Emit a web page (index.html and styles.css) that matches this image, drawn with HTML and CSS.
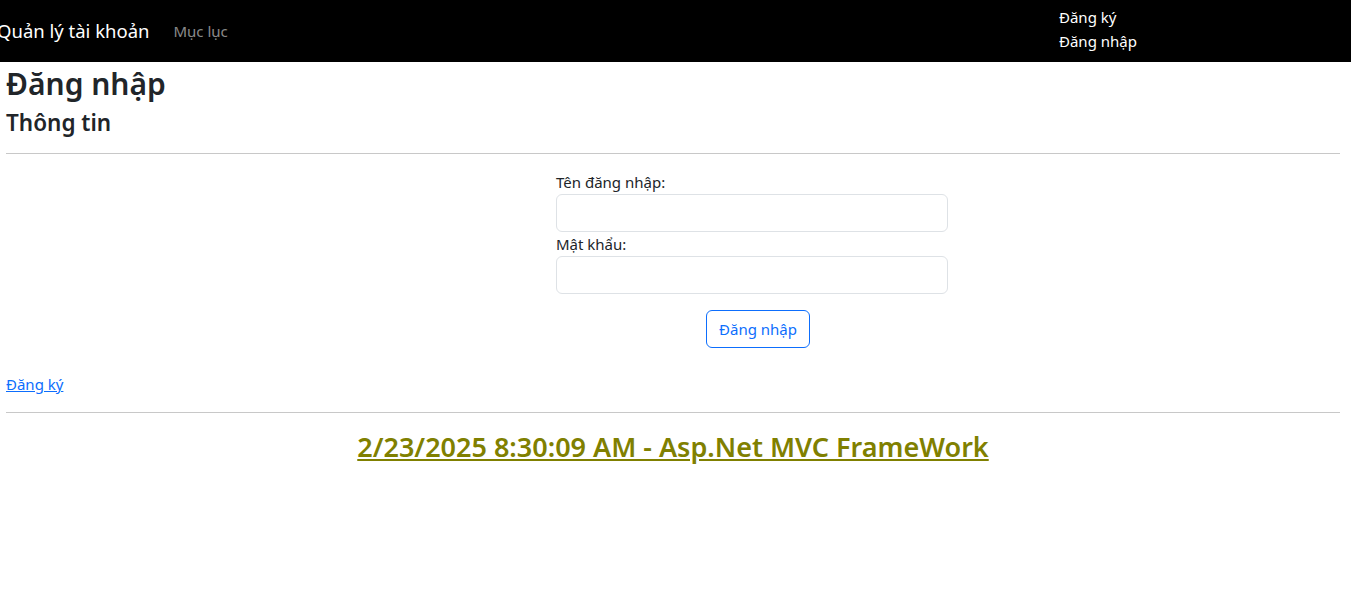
FILE: index.html
```html
<!DOCTYPE html>
<html lang="vi">
<head>
<meta charset="utf-8">
<title>Đăng nhập</title>
<link rel="stylesheet" href="styles.css">
</head>
<body>
<nav class="navbar">
  <div class="nav-left">
    <a class="brand" href="#">Quản lý tài khoản</a>
    <a class="nav-link" href="#">Mục lục</a>
  </div>
  <ul class="nav-right">
    <li><a href="#">Đăng ký</a></li>
    <li><a href="#">Đăng nhập</a></li>
  </ul>
</nav>
<main class="content">
  <h1 class="title">Đăng nhập</h1>
  <h2 class="subtitle">Thông tin</h2>
  <hr class="rule">
  <form class="login-form">
    <label class="field-label" for="u">Tên đăng nhập:</label>
    <input class="field-input" id="u" type="text">
    <label class="field-label" for="p">Mật khẩu:</label>
    <input class="field-input" id="p" type="password">
    <div class="actions"><button class="btn" type="button">Đăng nhập</button></div>
  </form>
  <a class="register-link" href="#">Đăng ký</a>
  <hr class="rule rule-bottom">
  <footer class="footer"><a href="#">2/23/2025 8:30:09 AM - Asp.Net MVC FrameWork</a></footer>
</main>
</body>
</html>
```
FILE: styles.css
```css
* { box-sizing: border-box; }
body {
  margin: 0;
  font-family: "Noto Sans", "Open Sans", sans-serif;
  font-size: 15px;
  color: #212529;
  background: #fff;
}
a { text-decoration: none; }
.navbar {
  background: #000;
  height: 62px;
  display: flex;
  align-items: center;
}
.nav-left {
  display: flex;
  align-items: center;
  margin-left: -3px;
  margin-top: -1px;
  width: 1062px;
}
.brand {
  color: #fff;
  font-size: 18.5px;
  margin-right: 24px;
}
.nav-link {
  color: rgba(255,255,255,0.55);
  font-size: 15px;
}
.nav-right {
  list-style: none;
  margin: -4px 0 0;
  padding: 0;
  display: flex;
  flex-direction: column;
}
.nav-right a {
  color: #fff;
  font-size: 15px;
  line-height: 24px;
}
.content {
  padding: 0 11px 0 6px;
}
.title {
  margin: 2px 0 0;
  font-size: 30px;
  font-weight: 600;
  line-height: 40px;
}
.subtitle {
  margin: 4px 0 0;
  font-size: 22.5px;
  font-weight: 600;
  line-height: 30px;
}
.rule {
  margin: 15px 0 0;
  border: 0;
  border-top: 1px solid #c8c8c8;
}
.login-form {
  width: 392px;
  margin: 18px 0 0 550px;
  display: flex;
  flex-direction: column;
}
.field-label {
  font-size: 15px;
  line-height: 21px;
  margin-bottom: 1px;
}
.field-input {
  height: 38px;
  border: 1px solid #dee2e6;
  border-radius: 6px;
  margin-bottom: 2px;
  font: inherit;
}
.actions {
  display: flex;
  justify-content: center;
  margin-top: 14px;
  padding-left: 12px;
}
.btn {
  height: 38px;
  padding: 0 12px;
  background: #fff;
  border: 1px solid #0d6efd;
  border-radius: 6px;
  color: #0d6efd;
  font: inherit;
  font-size: 15px;
}
.register-link {
  display: inline-block;
  margin-top: 26px;
  color: #0d6efd;
  text-decoration: underline;
  font-size: 15px;
}
.rule-bottom { margin-top: 18px; }
.footer {
  text-align: center;
  margin-top: 15px;
}
.footer a {
  color: #808000;
  font-size: 27px;
  font-weight: 600;
  text-decoration: underline;
}
```
